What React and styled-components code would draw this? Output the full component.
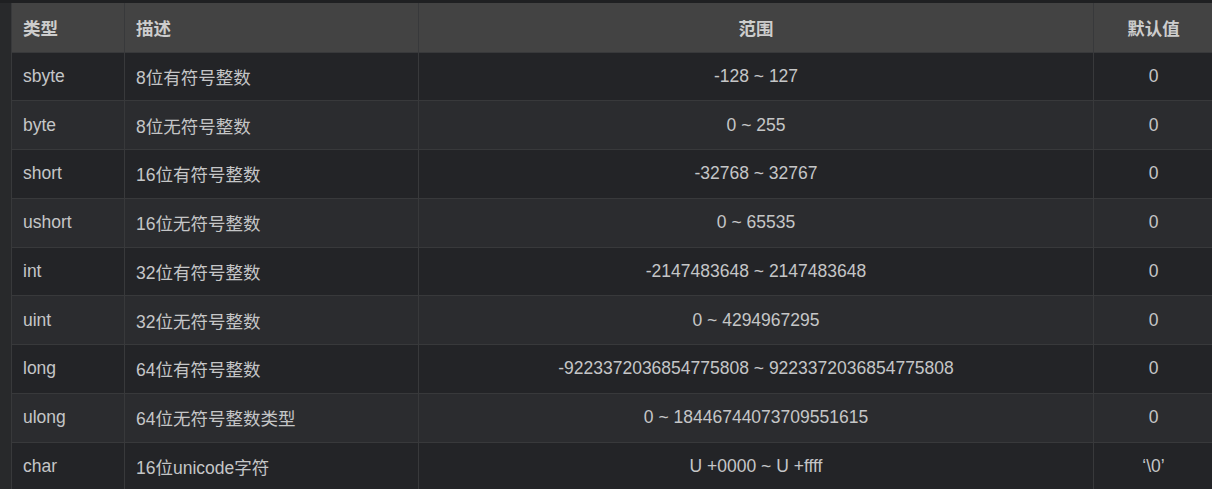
import React from "react";
import styled, { createGlobalStyle } from "styled-components";

const Global = createGlobalStyle`
  html, body {
    margin: 0;
    padding: 0;
    background: #202123;
  }
  body {
    font-family: "Liberation Sans", Arial, "Noto Sans CJK SC", sans-serif;
    overflow: hidden;
  }
`;

const Page = styled.div`
  padding: 3px 0 0 11px;
  background: linear-gradient(to bottom, #1f2022 0, #1f2022 3px, #28292b 3px);
  min-height: 489px;
  box-sizing: border-box;
`;

const Table = styled.table`
  width: 1202px;
  border-collapse: collapse;
  table-layout: fixed;
  font-size: 17.5px;
  color: #c5c6c7;
`;

const HeadRow = styled.tr`
  height: 49px;
  background: #434343;
`;

const Row = styled.tr`
  height: 48.75px;
  background: ${(p) => (p.$alt ? "#2b2c2f" : "#232427")};
`;

const HeadCell = styled.th`
  border: 1px solid #38393b;
  border-top: none;
  padding: 0 11px;
  font-weight: bold;
  color: #cdcdcd;
  text-align: ${(p) => p.$align || "left"};
  font-family: "Liberation Sans", Arial, "Noto Sans CJK SC", sans-serif;
`;

const Cell = styled.td`
  border: 1px solid #38393b;
  padding: 0 11px;
  text-align: ${(p) => p.$align || "left"};
  white-space: nowrap;
`;

const rows = [
  ["sbyte", "8位有符号整数", "-128 ~ 127", "0"],
  ["byte", "8位无符号整数", "0 ~ 255", "0"],
  ["short", "16位有符号整数", "-32768 ~ 32767", "0"],
  ["ushort", "16位无符号整数", "0 ~ 65535", "0"],
  ["int", "32位有符号整数", "-2147483648 ~ 2147483648", "0"],
  ["uint", "32位无符号整数", "0 ~ 4294967295", "0"],
  ["long", "64位有符号整数", "-9223372036854775808 ~ 9223372036854775808", "0"],
  ["ulong", "64位无符号整数类型", "0 ~ 18446744073709551615", "0"],
  ["char", "16位unicode字符", "U +0000 ~ U +ffff", "‘\\0’"],
];

export default function App() {
  return (
    <Page>
      <Global />
      <Table>
        <colgroup>
          <col style={{ width: 113 }} />
          <col style={{ width: 294 }} />
          <col style={{ width: 675 }} />
          <col style={{ width: 120 }} />
        </colgroup>
        <thead>
          <HeadRow>
            <HeadCell>类型</HeadCell>
            <HeadCell>描述</HeadCell>
            <HeadCell $align="center">范围</HeadCell>
            <HeadCell $align="center">默认值</HeadCell>
          </HeadRow>
        </thead>
        <tbody>
          {rows.map((r, i) => (
            <Row key={r[0]} $alt={i % 2 === 1}>
              <Cell>{r[0]}</Cell>
              <Cell>{r[1]}</Cell>
              <Cell $align="center">{r[2]}</Cell>
              <Cell $align="center">{r[3]}</Cell>
            </Row>
          ))}
        </tbody>
      </Table>
    </Page>
  );
}
